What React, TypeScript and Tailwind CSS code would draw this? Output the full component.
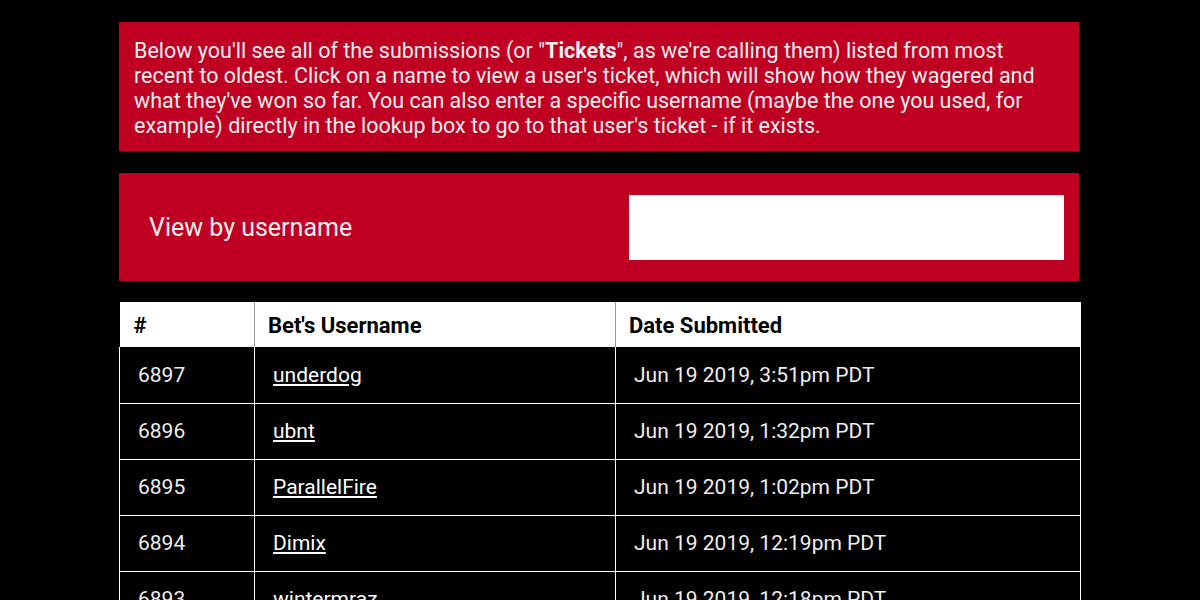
import React from 'react';

const tickets = [
  { id: 6897, name: 'underdog', date: 'Jun 19 2019, 3:51pm PDT' },
  { id: 6896, name: 'ubnt', date: 'Jun 19 2019, 1:32pm PDT' },
  { id: 6895, name: 'ParallelFire', date: 'Jun 19 2019, 1:02pm PDT' },
  { id: 6894, name: 'Dimix', date: 'Jun 19 2019, 12:19pm PDT' },
  { id: 6893, name: 'wintermraz', date: 'Jun 19 2019, 12:18pm PDT' },
  { id: 6892, name: 'Kirbo', date: 'Jun 19 2019, 11:54am PDT' },
];

const App: React.FC = () => {
  return (
    <div className="min-h-screen bg-black pt-[22px] pb-10 font-['Roboto',sans-serif] text-[#eeeeee]">
      <div className="mx-auto w-[962px]">
        {/* Intro */}
        <div className="w-[960px] bg-[#c00022] px-[15px] pt-[16px] pb-[13px] text-[21.5px] leading-[25px]">
          Below you'll see all of the submissions (or "<b>Tickets</b>", as we're calling them) listed from most
          <br />
          recent to oldest. Click on a name to view a user's ticket, which will show how they wagered and
          <br />
          what they've won so far. You can also enter a specific username (maybe the one you used, for
          <br />
          example) directly in the lookup box to go to that user's ticket - if it exists.
        </div>

        {/* Lookup */}
        <div className="mt-[22px] flex h-[108px] w-[960px] items-center justify-between bg-[#c00022] pl-[30px] pr-[15px]">
          <span className="pt-[2px] text-[25px]">View by username</span>
          <input type="text" className="h-[65px] w-[435px] border-0 bg-white text-black outline-none" />
        </div>

        {/* Table */}
        <table className="mt-[21px] w-[961px] table-fixed border-collapse">
          <colgroup>
            <col className="w-[135px]" />
            <col className="w-[361px]" />
            <col className="w-[465px]" />
          </colgroup>
          <thead>
            <tr className="h-[45px] bg-white text-left text-[22px] text-black">
              <th className="border-r border-[#999999] pt-[2px] pl-[14px] font-bold">#</th>
              <th className="border-r border-[#999999] pt-[2px] pl-[13px] font-bold">Bet's Username</th>
              <th className="pt-[2px] pl-[13px] font-bold">Date Submitted</th>
            </tr>
          </thead>
          <tbody>
            {tickets.map((t) => (
              <tr key={t.id} className="h-[56px] text-[21px]">
                <td className="border border-t-0 border-white pt-[2px] pl-[18px]">{t.id}</td>
                <td className="border border-t-0 border-white pt-[2px] pl-[18px]">
                  <a href="#" className="text-white underline">
                    {t.name}
                  </a>
                </td>
                <td className="border border-t-0 border-white pt-[2px] pl-[18px]">{t.date}</td>
              </tr>
            ))}
          </tbody>
        </table>
      </div>
    </div>
  );
};

export default App;
